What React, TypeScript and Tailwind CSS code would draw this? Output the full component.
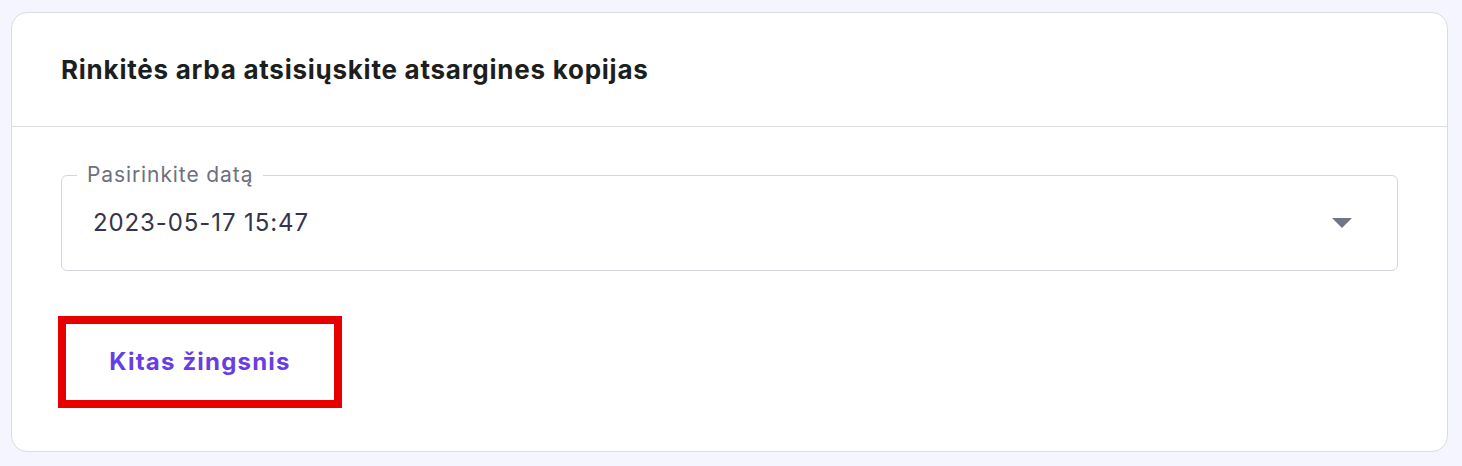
import { useState } from 'react';

const BACKUPS = ['2023-05-17 15:47', '2023-05-16 15:47', '2023-05-15 15:47'];

export default function App() {
  const [selected] = useState(BACKUPS[0]);

  return (
    <div className="min-h-screen bg-[#f4f5ff] pt-[12px] pl-[11px] pr-[14px] pb-[13px] font-['Inter',sans-serif]">
      <div className="bg-white border border-[#dadce0] rounded-[16px]">
        {/* Header */}
        <div className="h-[114px] flex items-center px-[49px] border-b border-[#dadce0]">
          <h2 className="text-[26px] font-bold text-[#1d1e20] tracking-[0.75px]">
            Rinkitės arba atsisiųskite atsargines kopijas
          </h2>
        </div>

        {/* Body */}
        <div className="px-[49px] pt-[36px] pb-[43px]">
          <fieldset className="border border-[#d5d7dd] rounded-[6px]">
            <legend className="ml-[15px] px-[10px] text-[21px] leading-[24px] tracking-[0.9px] text-[#6d7081]">
              Pasirinkite datą
            </legend>
            <div className="flex items-center justify-between pl-[31px] pr-[45px] pt-[20px] pb-[31px]">
              <span className="text-[24px] leading-[32px] tracking-[0.9px] text-[#36344d]">{selected}</span>
              <svg width="20" height="10" viewBox="0 0 20 10" className="shrink-0">
                <path d="M0 0 H20 L10 10 Z" fill="#727586" />
              </svg>
            </div>
          </fieldset>

          <div className="mt-[45px] -ml-[3px]">
            <button className="w-[284px] h-[92px] border-[8px] border-[#e60000] flex items-center justify-center text-[24px] font-bold tracking-[1.2px] text-[#673de6]">
              Kitas žingsnis
            </button>
          </div>
        </div>
      </div>
    </div>
  );
}
